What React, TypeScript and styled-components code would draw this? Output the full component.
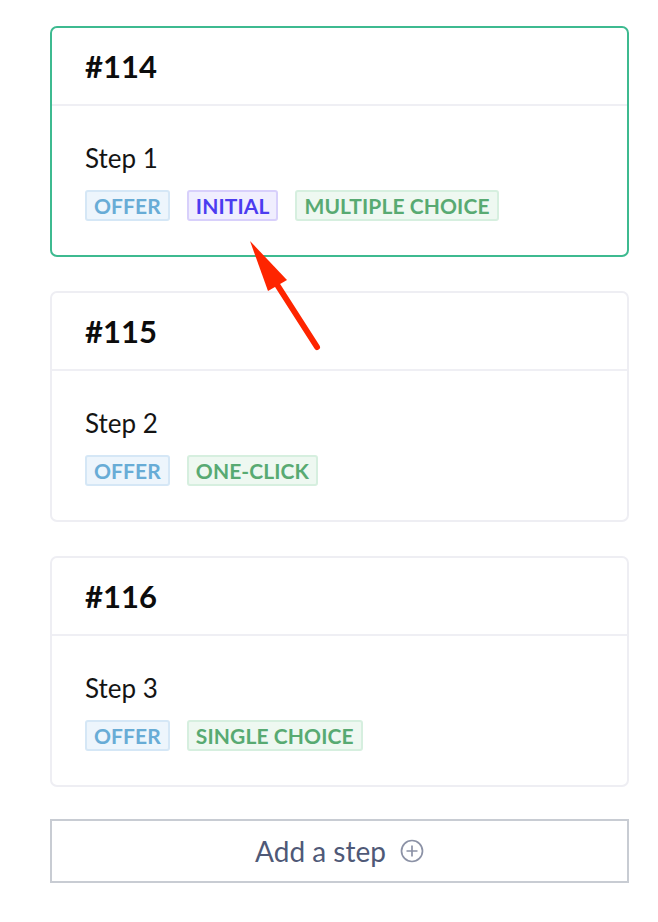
import React from "react";
import styled, { createGlobalStyle } from "styled-components";

const Global = createGlobalStyle`
  html, body { margin: 0; padding: 0; background: #ffffff; }
  body { font-family: "Lato", "Noto Sans", sans-serif; color: #111; }
`;

const Page = styled.div`
  position: relative;
  padding: 26px 29px 40px 50px;
  display: flex;
  flex-direction: column;
  gap: 34px;
`;

const Card = styled.div<{ $active?: boolean }>`
  border: 2px solid ${(p) => (p.$active ? "#3dba90" : "#eeeef3")};
  border-radius: 7px;
  display: flex;
  flex-direction: column;
  background: #fff;
`;

const CardHeader = styled.div`
  height: 78px;
  box-sizing: border-box;
  padding: 0 0 0 33px;
  display: flex;
  align-items: center;
  border-bottom: 2px solid #efeff4;
  font-size: 31px;
  font-weight: 700;
  color: #0c0c0c;
`;

const CardBody = styled.div`
  padding: 37px 33px 0 33px;
  height: 149px;
  box-sizing: border-box;
  display: flex;
  flex-direction: column;
  gap: 17px;
`;

const StepName = styled.div`
  font-size: 26px;
  line-height: 30px;
  color: #141414;
`;

const Tags = styled.div`
  display: flex;
  gap: 17px;
`;

const tagColors = {
  blue: { bg: "#edf5fc", border: "#d5e7f6", fg: "#68acd6" },
  purple: { bg: "#f0eefe", border: "#d8d0fb", fg: "#4c3cf0" },
  green: { bg: "#eef8f1", border: "#d6efdf", fg: "#58aa72" },
};

const Tag = styled.span<{ $tone: keyof typeof tagColors }>`
  box-sizing: border-box;
  height: 31px;
  padding: 0 7px;
  display: inline-flex;
  align-items: center;
  border-radius: 3px;
  border: 2px solid ${(p) => tagColors[p.$tone].border};
  background: ${(p) => tagColors[p.$tone].bg};
  color: ${(p) => tagColors[p.$tone].fg};
  font-size: 21px;
  font-weight: 700;
  letter-spacing: 0.1px;
`;

const AddButton = styled.button`
  margin-top: -2px;
  height: 64px;
  border: 2px solid #c8ccd3;
  background: #fff;
  display: flex;
  align-items: center;
  justify-content: center;
  gap: 14px;
  font-family: inherit;
  font-size: 28px;
  color: #4f5977;
  cursor: pointer;
`;

const Arrow = styled.svg`
  position: absolute;
  left: 240px;
  top: 235px;
  pointer-events: none;
`;

const steps = [
  { id: 114, name: "Step 1", active: true, tags: [["OFFER", "blue"], ["INITIAL", "purple"], ["MULTIPLE CHOICE", "green"]] },
  { id: 115, name: "Step 2", tags: [["OFFER", "blue"], ["ONE-CLICK", "green"]] },
  { id: 116, name: "Step 3", tags: [["OFFER", "blue"], ["SINGLE CHOICE", "green"]] },
] as const;

export default function App() {
  return (
    <>
      <Global />
      <Page>
        {steps.map((s) => (
          <Card key={s.id} $active={"active" in s && s.active}>
            <CardHeader>#{s.id}</CardHeader>
            <CardBody>
              <StepName>{s.name}</StepName>
              <Tags>
                {s.tags.map(([label, tone]) => (
                  <Tag key={label} $tone={tone as keyof typeof tagColors}>{label}</Tag>
                ))}
              </Tags>
            </CardBody>
          </Card>
        ))}
        <AddButton>
          Add a step
          <svg width="24" height="24" viewBox="0 0 24 24" fill="none" stroke="#8c92a6" strokeWidth="1.7">
            <circle cx="12" cy="12" r="10.5" />
            <path d="M12 6.5v11M6.5 12h11" />
          </svg>
        </AddButton>
        <Arrow width="90" height="120" viewBox="0 0 90 120">
          <path d="M36 48 L77 112" stroke="#fe2500" strokeWidth="6" strokeLinecap="round" fill="none" />
          <path d="M10 6 L47 45 L28 56 Z" fill="#fe2500" strokeLinejoin="round" />
        </Arrow>
      </Page>
    </>
  );
}
